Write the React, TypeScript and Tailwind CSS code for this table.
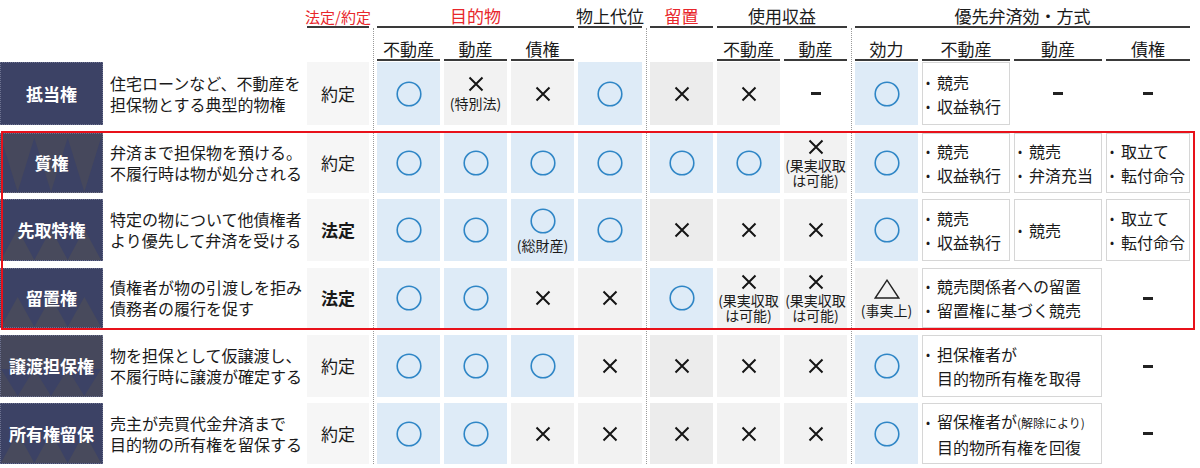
import React from 'react';

type Mark = 'o' | 'x' | '-' | 'tri';
type MarkCell = { m: Mark; note?: string[] };
type Prio = { col: string; dash?: boolean; items?: React.ReactNode[][] };
type Pattern = 'plain' | 'top' | 'up' | 'down';

type Row = {
  name: string;
  pattern: Pattern;
  desc: string[];
  kind: string;
  legal?: boolean;
  marks: MarkCell[];
  prio: Prio[];
};

const RED = 'text-[#e8262b]';

// 目的物(不動産/動産/債権), 物上代位, 留置, 使用収益(不動産/動産), 効力
const MARK_COLS = [
  'col-start-5',
  'col-start-6',
  'col-start-7',
  'col-start-8',
  'col-start-10',
  'col-start-11',
  'col-start-12',
  'col-start-14',
];
const ROW_STARTS = ['row-start-3', 'row-start-5', 'row-start-7', 'row-start-9', 'row-start-11', 'row-start-13'];

const o: MarkCell = { m: 'o' };
const x: MarkCell = { m: 'x' };
const dash: MarkCell = { m: '-' };
const fruit: MarkCell = { m: 'x', note: ['(果実収取', 'は可能)'] };

const rows: Row[] = [
  {
    name: '抵当権',
    pattern: 'plain',
    desc: ['住宅ローンなど、不動産を', '担保物とする典型的物権'],
    kind: '約定',
    marks: [o, { m: 'x', note: ['(特別法)'] }, x, o, x, x, dash, o],
    prio: [
      { col: 'col-start-15', items: [['競売'], ['収益執行']] },
      { col: 'col-start-16', dash: true },
      { col: 'col-start-17', dash: true },
    ],
  },
  {
    name: '質権',
    pattern: 'top',
    desc: ['弁済まで担保物を預ける。', '不履行時は物が処分される'],
    kind: '約定',
    marks: [o, o, o, o, o, o, fruit, o],
    prio: [
      { col: 'col-start-15', items: [['競売'], ['収益執行']] },
      { col: 'col-start-16', items: [['競売'], ['弁済充当']] },
      { col: 'col-start-17', items: [['取立て'], ['転付命令']] },
    ],
  },
  {
    name: '先取特権',
    pattern: 'up',
    desc: ['特定の物について他債権者', 'より優先して弁済を受ける'],
    kind: '法定',
    legal: true,
    marks: [o, o, { m: 'o', note: ['(総財産)'] }, o, x, x, x, o],
    prio: [
      { col: 'col-start-15', items: [['競売'], ['収益執行']] },
      { col: 'col-start-16', items: [['競売']] },
      { col: 'col-start-17', items: [['取立て'], ['転付命令']] },
    ],
  },
  {
    name: '留置権',
    pattern: 'up',
    desc: ['債権者が物の引渡しを拒み', '債務者の履行を促す'],
    kind: '法定',
    legal: true,
    marks: [o, o, x, x, o, fruit, fruit, { m: 'tri', note: ['(事実上)'] }],
    prio: [
      { col: 'col-start-15 col-span-2', items: [['競売関係者への留置'], ['留置権に基づく競売']] },
      { col: 'col-start-17', dash: true },
    ],
  },
  {
    name: '譲渡担保権',
    pattern: 'down',
    desc: ['物を担保として仮譲渡し、', '不履行時に譲渡が確定する'],
    kind: '約定',
    marks: [o, o, o, x, x, x, x, o],
    prio: [
      { col: 'col-start-15 col-span-2', items: [['担保権者が', '目的物所有権を取得']] },
      { col: 'col-start-17', dash: true },
    ],
  },
  {
    name: '所有権留保',
    pattern: 'up',
    desc: ['売主が売買代金弁済まで', '目的物の所有権を留保する'],
    kind: '約定',
    marks: [o, o, x, x, x, x, x, o],
    prio: [
      {
        col: 'col-start-15 col-span-2',
        items: [
          [
            <>
              留保権者が<span className="text-[12px]">(解除により)</span>
            </>,
            '目的物所有権を回復',
          ],
        ],
      },
      { col: 'col-start-17', dash: true },
    ],
  },
];

const Circle = () => (
  <svg width="26" height="26" viewBox="0 0 26 26">
    <circle cx="13" cy="13" r="11.8" fill="none" stroke="#2f86c6" strokeWidth="1.6" />
  </svg>
);

const Cross = () => (
  <svg width="16" height="16" viewBox="0 0 16 16">
    <path d="M1.5 1.5L14.5 14.5M14.5 1.5L1.5 14.5" stroke="#151515" strokeWidth="2" />
  </svg>
);

const Triangle = () => (
  <svg width="26" height="20" viewBox="0 0 26 20">
    <path d="M13 1.2L24.8 19H1.2Z" fill="none" stroke="#222" strokeWidth="1.4" />
  </svg>
);

const Dash = () => <div className="h-[3px] w-[10px] bg-[#222]" />;

const LabelPattern = ({ pattern }: { pattern: Pattern }) => {
  if (pattern === 'plain') return null;
  const peaks = [0, 34, 68, 102];
  return (
    <svg className="absolute inset-0 h-full w-full" viewBox="0 0 103 62" preserveAspectRatio="none">
      {pattern === 'top' &&
        peaks.map((p) => <polygon key={p} points={`${p - 17},62 ${p},4 ${p + 17},62`} fill="#3c4265" />)}
      {pattern === 'up' &&
        peaks.map((p) => <polygon key={p} points={`${p},62 ${p + 17},30 ${p + 34},62`} fill="#484a5c" />)}
      {pattern === 'down' &&
        peaks.map((p) => <polygon key={p} points={`${p},34 ${p + 17},62 ${p + 34},34`} fill="#3c4265" />)}
    </svg>
  );
};

const labelBg: Record<Pattern, string> = {
  plain: 'bg-[#3c4265]',
  top: 'bg-[#46485c]',
  up: 'bg-[#3c4265]',
  down: 'bg-[#46485c]',
};

const MarkBox = ({ cell, col, row, darker }: { cell: MarkCell; col: string; row: string; darker: boolean }) => {
  const bg =
    cell.m === 'o' ? 'bg-[#deebf7]' : cell.m === '-' ? 'bg-white' : darker ? 'bg-[#ececec]' : 'bg-[#f2f2f2]';
  return (
    <div className={`${col} ${row} ${bg} flex flex-col items-center justify-center`}>
      {cell.m === 'o' && <Circle />}
      {cell.m === 'x' && <Cross />}
      {cell.m === 'tri' && <Triangle />}
      {cell.m === '-' && <Dash />}
      {cell.note && (
        <div className={`whitespace-nowrap text-center text-[14px] leading-[15px] ${cell.note.length > 1 ? 'mt-[3px]' : 'mt-[4px]'}`}>
          {cell.note.map((n) => (
            <div key={n}>{n}</div>
          ))}
        </div>
      )}
    </div>
  );
};

const PrioBox = ({ prio, row }: { prio: Prio; row: string }) => {
  if (prio.dash) {
    return (
      <div className={`${prio.col} ${row} flex items-center justify-center`}>
        <Dash />
      </div>
    );
  }
  return (
    <div
      className={`${prio.col} ${row} flex flex-col justify-center whitespace-nowrap border border-[#d6d6d6] bg-white pl-[3px] text-[16px] leading-[24px]`}
    >
      {prio.items!.map((lines, i) =>
        lines.map((ln, j) => (
          <div key={`${i}-${j}`} className="flex items-center">
            <span className="inline-block w-[11px] text-[12px] leading-none">{j === 0 ? '•' : ''}</span>
            <span>{ln}</span>
          </div>
        ))
      )}
    </div>
  );
};

const HeadTop = ({ cls, children, red, size = 'text-[17px]' }: { cls: string; children: React.ReactNode; red?: boolean; size?: string }) => (
  <div
    className={`${cls} row-start-1 flex items-end justify-center whitespace-nowrap border-b-2 border-[#3a3a3a] pb-[2px] leading-none ${size} ${red ? RED : ''}`}
  >
    {children}
  </div>
);

const HeadSub = ({ cls, children }: { cls: string; children: React.ReactNode }) => (
  <div
    className={`${cls} row-start-2 mb-[1px] flex items-end justify-center whitespace-nowrap border-b-2 border-[#3a3a3a] pb-[2px] text-[17px] leading-none`}
  >
    {children}
  </div>
);

export default function App() {
  return (
    <div className="h-[468px] w-[1200px] overflow-hidden bg-white font-['Noto_Sans_CJK_JP','Noto_Sans',sans-serif] text-[#1a1a1a]">
      <div className="grid grid-cols-[103px_196px_62px_0px_63px_63px_63px_64px_0px_63px_63px_63px_0px_63px_88px_88px_84px] grid-rows-[28px_34px_63px_8px_60px_6px_62px_7px_60px_7px_62px_6px_61px] gap-x-[4px]">
        {/* header row 1 */}
        <HeadTop cls="col-start-3" red size="text-[15px]">
          法定/約定
        </HeadTop>
        <HeadTop cls="col-start-5 col-span-3" red>
          目的物
        </HeadTop>
        <HeadTop cls="col-start-8">物上代位</HeadTop>
        <HeadTop cls="col-start-10" red>
          留置
        </HeadTop>
        <HeadTop cls="col-start-11 col-span-2">使用収益</HeadTop>
        <HeadTop cls="col-start-14 col-span-4">優先弁済効・方式</HeadTop>

        {/* header row 2 */}
        <HeadSub cls="col-start-5">不動産</HeadSub>
        <HeadSub cls="col-start-6">動産</HeadSub>
        <HeadSub cls="col-start-7">債権</HeadSub>
        <HeadSub cls="col-start-11">不動産</HeadSub>
        <HeadSub cls="col-start-12">動産</HeadSub>
        <HeadSub cls="col-start-14">効力</HeadSub>
        <HeadSub cls="col-start-15">不動産</HeadSub>
        <HeadSub cls="col-start-16">動産</HeadSub>
        <HeadSub cls="col-start-17">債権</HeadSub>

        {/* dotted separators */}
        <div className="col-start-4 row-start-2 row-end-14 border-l border-dotted border-[#9a9a9a]" />
        <div className="col-start-9 row-start-2 row-end-14 border-l border-dotted border-[#9a9a9a]" />
        <div className="col-start-13 row-start-2 row-end-14 border-l border-dotted border-[#9a9a9a]" />

        {rows.map((r, i) => {
          const row = ROW_STARTS[i];
          return (
            <React.Fragment key={r.name}>
              <div
                className={`col-start-1 ${row} relative flex items-center justify-center overflow-hidden border border-dotted border-[#6d7290] ${labelBg[r.pattern]}`}
              >
                <LabelPattern pattern={r.pattern} />
                <span className="relative text-[17px] font-bold text-white">{r.name}</span>
              </div>
              <div className={`col-start-2 ${row} flex flex-col justify-center whitespace-nowrap pl-[3px] text-[16px] leading-[21px]`}>
                {r.desc.map((d) => (
                  <div key={d}>{d}</div>
                ))}
              </div>
              <div
                className={`col-start-3 ${row} flex items-center justify-center bg-[#f6f6f6] text-[17px] ${r.legal ? 'font-bold' : ''}`}
              >
                {r.kind}
              </div>
              {r.marks.map((c, j) => (
                <MarkBox key={j} cell={c} col={MARK_COLS[j]} row={row} darker={j === 4} />
              ))}
              {r.prio.map((p) => (
                <PrioBox key={p.col} prio={p} row={row} />
              ))}
            </React.Fragment>
          );
        })}

        {/* highlight frame around 質権〜留置権 */}
        <div className="pointer-events-none relative z-10 col-span-full row-start-4 row-end-11 mt-[6px] mb-[5px] ml-[1px] mr-[-5px] border-2 border-[#e8111a]" />
      </div>
    </div>
  );
}
